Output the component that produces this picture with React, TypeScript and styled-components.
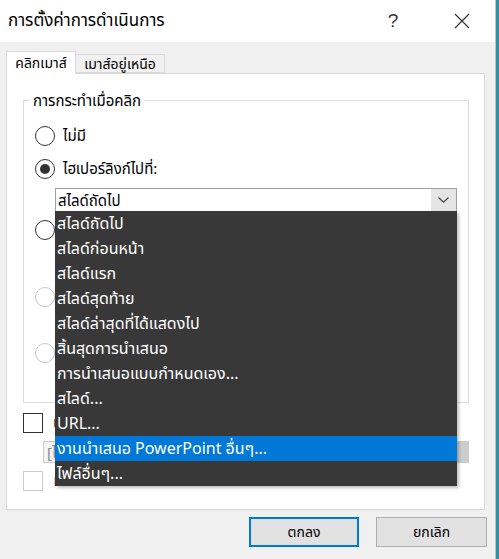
import React from 'react';
import styled, { createGlobalStyle } from 'styled-components';

const GlobalStyle = createGlobalStyle`
  html, body { margin: 0; padding: 0; background: #f0f0f0; }
  body { font-family: "Noto Sans", "Noto Sans Thai", Tahoma, sans-serif; color: #000; }
  * { box-sizing: border-box; }
`;

const Screen = styled.div`
  display: flex;
  width: 499px;
  height: 559px;
  overflow: hidden;
`;

const Dialog = styled.div`
  width: 496px;
  height: 559px;
  background: #f0f0f0;
  border-right: 1px solid #c4c4c4;
  display: flex;
  flex-direction: column;
`;

const Edge = styled.div`
  flex: 1;
  background: #2f8fa3;
`;

const TitleBar = styled.div`
  height: 42px;
  background: #fff;
  display: flex;
  align-items: center;
  padding-left: 8px;
`;

const Title = styled.div`
  flex: 1;
  font-size: 17px;
  color: #000;
`;

const HelpButton = styled.div`
  width: 46px;
  margin-right: 23px;
  text-align: center;
  font-size: 19px;
  color: #333;
  font-family: "Liberation Sans", sans-serif;
`;

const CloseButton = styled.div`
  width: 46px;
  margin-right: 10px;
  display: flex;
  justify-content: center;
  align-items: center;
`;

const Body = styled.div`
  flex: 1;
  display: flex;
  flex-direction: column;
  padding: 9px 8px 0 6px;
`;

const TabStrip = styled.div`
  display: flex;
  align-items: flex-end;
  height: 22px;
`;

const Tab = styled.div<{ $active?: boolean; $w: number }>`
  position: relative;
  z-index: ${p => (p.$active ? 1 : 0)};
  width: ${p => p.$w}px;
  height: ${p => (p.$active ? '23px' : '19px')};
  margin-bottom: ${p => (p.$active ? '-1px' : '0')};
  background: ${p => (p.$active ? '#fff' : '#f0f0f0')};
  border: 1px solid #d9d9d9;
  border-bottom: ${p => (p.$active ? 'none' : '1px solid #d9d9d9')};
  border-left: ${p => (p.$active ? '1px solid #d9d9d9' : 'none')};
  font-size: 14px;
  line-height: ${p => (p.$active ? '21px' : '17px')};
  text-align: center;
  white-space: nowrap;
`;

const Panel = styled.div`
  height: 437px;
  margin-right: 2px;
  background: #fff;
  border: 1px solid #d9d9d9;
  padding: 16px 15px 0 16px;
  display: flex;
  flex-direction: column;
`;

const GroupBox = styled.fieldset`
  margin: 0;
  padding: 0;
  border: 1px solid #dcdcdc;
  min-width: 0;
`;

const Legend = styled.legend`
  margin-left: 6px;
  padding: 0 3px;
  font-size: 15px;
  line-height: 20px;
`;

const Options = styled.div`
  display: flex;
  flex-direction: column;
  padding: 15px 11px 10px 11px;
`;

const OptionRow = styled.div<{ $mt: number; $disabled?: boolean }>`
  display: flex;
  align-items: center;
  height: 22px;
  margin-top: ${p => p.$mt}px;
  gap: 8px;
  font-size: 15px;
  color: ${p => (p.$disabled ? '#a0a0a0' : '#000')};
  white-space: nowrap;
`;

const Radio = styled.span<{ $checked?: boolean; $disabled?: boolean }>`
  width: 20px;
  height: 20px;
  flex: none;
  border-radius: 50%;
  border: 1px solid ${p => (p.$disabled ? '#c6c6c6' : '#333')};
  background: #fff;
  display: flex;
  align-items: center;
  justify-content: center;
  &::after {
    content: '';
    display: ${p => (p.$checked ? 'block' : 'none')};
    width: 10px;
    height: 10px;
    border-radius: 50%;
    background: #333;
  }
`;

const Combo = styled.div<{ $mt: number }>`
  position: relative;
  display: flex;
  height: 24px;
  margin-top: ${p => p.$mt}px;
  margin-left: 20px;
  border: 1px solid #a0a0a0;
  background: #fff;
`;

const ComboText = styled.div`
  flex: 1;
  padding-left: 2px;
  font-size: 15px;
  line-height: 22px;
  white-space: nowrap;
`;

const ComboButton = styled.div`
  width: 25px;
  background: #e5e5e5;
  display: flex;
  align-items: center;
  justify-content: center;
`;

const HiddenField = styled.div<{ $mt: number; $disabled?: boolean }>`
  height: 24px;
  margin-top: ${p => p.$mt}px;
  margin-left: 20px;
  border: 1px solid ${p => (p.$disabled ? '#cccccc' : '#a0a0a0')};
  background: ${p => (p.$disabled ? '#f5f5f5' : '#fff')};
`;

const DropList = styled.ul`
  position: absolute;
  top: 100%;
  left: -1px;
  right: -1px;
  margin: 0;
  padding: 0;
  list-style: none;
  background: #383838;
  z-index: 5;
  box-shadow: 2px 2px 3px rgba(0, 0, 0, 0.25);
`;

const DropItem = styled.li<{ $selected?: boolean }>`
  height: 25px;
  padding-left: 2px;
  font-size: 16px;
  line-height: 25px;
  color: #fff;
  white-space: nowrap;
  background: ${p => (p.$selected ? '#0078d7' : 'transparent')};
`;

const CheckRow = styled.div<{ $mt: number; $disabled?: boolean }>`
  display: flex;
  align-items: center;
  height: 20px;
  margin-top: ${p => p.$mt}px;
  gap: 10px;
  font-size: 15px;
  color: ${p => (p.$disabled ? '#a0a0a0' : '#000')};
  white-space: nowrap;
`;

const CheckBox = styled.span<{ $disabled?: boolean }>`
  width: 20px;
  height: 20px;
  flex: none;
  background: #fff;
  border: 1px solid ${p => (p.$disabled ? '#cccccc' : '#333')};
`;

const SoundCombo = styled.div<{ $mt: number }>`
  display: flex;
  height: 22px;
  margin-top: ${p => p.$mt}px;
  margin-left: 20px;
  border: 1px solid #cccccc;
  background: #f5f5f5;
`;

const SoundText = styled.div`
  flex: 1;
  padding-left: 3px;
  font-size: 15px;
  line-height: 20px;
  color: #8a8a8a;
`;

const SoundButton = styled.div`
  width: 14px;
  background: #cccccc;
`;

const ButtonRow = styled.div`
  display: flex;
  justify-content: flex-end;
  gap: 17px;
  margin-top: 7px;
`;

const DialogButton = styled.button<{ $default?: boolean; $w: number }>`
  width: ${p => p.$w}px;
  height: 30px;
  padding: 0;
  background: #e1e1e1;
  border: ${p => (p.$default ? '2px solid #0078d7' : '1px solid #adadad')};
  font-family: inherit;
  font-size: 14px;
  color: #000;
`;

const items = [
  'สไลด์ถัดไป',
  'สไลด์ก่อนหน้า',
  'สไลด์แรก',
  'สไลด์สุดท้าย',
  'สไลด์ล่าสุดที่ได้แสดงไป',
  'สิ้นสุดการนำเสนอ',
  'การนำเสนอแบบกำหนดเอง...',
  'สไลด์...',
  'URL...',
  'งานนำเสนอ PowerPoint อื่นๆ...',
  'ไฟล์อื่นๆ...',
];

export default function App() {
  return (
    <Screen>
      <GlobalStyle />
      <Dialog>
        <TitleBar>
          <Title>การตั้งค่าการดำเนินการ</Title>
          <HelpButton>?</HelpButton>
          <CloseButton>
            <svg width="16" height="16" viewBox="0 0 16 16">
              <path d="M1 1 L15 15 M15 1 L1 15" stroke="#333" strokeWidth="1.2" fill="none" />
            </svg>
          </CloseButton>
        </TitleBar>
        <Body>
          <TabStrip>
            <Tab $active $w={70}>คลิกเมาส์</Tab>
            <Tab $w={89}>เมาส์อยู่เหนือ</Tab>
          </TabStrip>
          <Panel>
            <GroupBox>
              <Legend>การกระทำเมื่อคลิก</Legend>
              <Options>
                <OptionRow $mt={0}>
                  <Radio />
                  <span>ไม่มี</span>
                </OptionRow>
                <OptionRow $mt={11}>
                  <Radio $checked />
                  <span>ไฮเปอร์ลิงก์ไปที่:</span>
                </OptionRow>
                <Combo $mt={8}>
                  <ComboText>สไลด์ถัดไป</ComboText>
                  <ComboButton>
                    <svg width="11" height="6" viewBox="0 0 11 6">
                      <path d="M0.5 0.5 L5.5 5.2 L10.5 0.5" stroke="#444" strokeWidth="1.2" fill="none" />
                    </svg>
                  </ComboButton>
                  <DropList>
                    {items.map((t, i) => (
                      <DropItem key={t} $selected={i === 9}>
                        {t}
                      </DropItem>
                    ))}
                  </DropList>
                </Combo>
                <OptionRow $mt={7}>
                  <Radio />
                  <span>เรียกใช้โปรแกรม:</span>
                </OptionRow>
                <HiddenField $mt={4} />
                <OptionRow $mt={17} $disabled>
                  <Radio $disabled />
                  <span>เรียกใช้แมโคร:</span>
                </OptionRow>
                <HiddenField $mt={4} $disabled />
                <OptionRow $mt={6} $disabled>
                  <Radio $disabled />
                  <span>การกระทำของวัตถุ:</span>
                </OptionRow>
                <HiddenField $mt={4} $disabled />
              </Options>
            </GroupBox>
            <CheckRow $mt={10}>
              <CheckBox />
              <span>เล่นเสียง:</span>
            </CheckRow>
            <SoundCombo $mt={8}>
              <SoundText>[ไม่มีเสียง]</SoundText>
              <SoundButton />
            </SoundCombo>
            <CheckRow $mt={8} $disabled>
              <CheckBox $disabled />
              <span>เน้นเมื่อคลิก</span>
            </CheckRow>
          </Panel>
          <ButtonRow>
            <DialogButton $default $w={110}>ตกลง</DialogButton>
            <DialogButton $w={111}>ยกเลิก</DialogButton>
          </ButtonRow>
        </Body>
      </Dialog>
      <Edge />
    </Screen>
  );
}
